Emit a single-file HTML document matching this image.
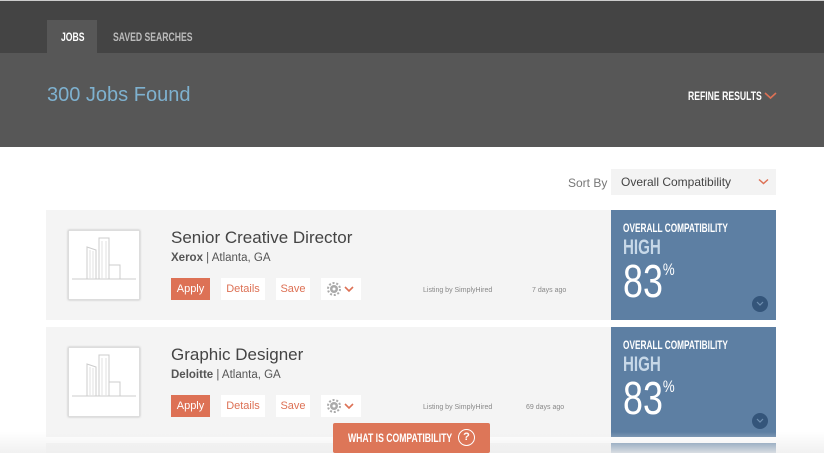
<!DOCTYPE html><html><head><style>
*{margin:0;padding:0;box-sizing:border-box}
html,body{width:824px;height:453px;overflow:hidden}
body{background:#fff;font-family:"Liberation Sans",sans-serif;position:relative}
.a{position:absolute}
.cond{font-weight:bold;transform:scaleX(.72);transform-origin:left center;white-space:nowrap}
.card{position:absolute;left:46px;width:730px;height:110px;background:#f4f4f4}
.blue{position:absolute;left:565px;top:0;width:165px;height:110px;background:#5d7fa3;color:#fff}
.logo{position:absolute;left:22px;top:20px;width:72px;height:70px;background:#fff;border:1px solid #ddd;box-shadow:0 0 2px #bbb}
.btn{position:absolute;top:68px;height:22px;background:#fff;color:#dd7155;font-size:11px;line-height:22px;text-align:center}
</style></head><body>
<div class="a" style="left:0;top:0;width:824px;height:53px;background:#444;border-top:1px solid #ccc"></div>
<div class="a" style="left:47px;top:20px;width:50px;height:33px;background:#575757"></div>
<div class="a cond" style="left:61px;top:30px;font-size:12px;color:#fff">JOBS</div>
<div class="a cond" style="left:113px;top:30px;font-size:12px;color:#bbb">SAVED SEARCHES</div>
<div class="a" style="left:0;top:53px;width:824px;height:94px;background:#575757"></div>
<div class="a" style="left:47px;top:84px;font-size:20px;color:#7eb1cf">300 Jobs Found</div>
<div class="a cond" style="left:688px;top:89px;font-size:12px;color:#fff">REFINE RESULTS</div>
<svg class="a" style="left:764px;top:91px" width="13" height="9"><path d="M1 2l5.5 5L12 2" stroke="#dd7155" stroke-width="1.6" fill="none"/></svg>
<div class="a" style="left:568px;top:176px;font-size:12px;color:#777">Sort By</div>
<div class="a" style="left:611px;top:169px;width:165px;height:26px;background:#f3f3f3;font-size:12px;color:#444;padding:6px 10px">Overall Compatibility</div>
<svg class="a" style="left:758px;top:178px" width="11" height="8"><path d="M1 1.5l4.5 4L10 1.5" stroke="#dd7155" stroke-width="1.5" fill="none"/></svg>

<div class="card" style="top:210px">
<div class="logo"><svg width="70" height="68"><g stroke="#ccc" fill="none"><path d="M3 48h64"/><rect x="30" y="7" width="10" height="41"/><path d="M18 16l9 3v29h-9z"/><rect x="40" y="34" width="11" height="14"/><path d="M21 19v29M24 20v28M33 10v38M37 10v38" stroke="#e2e2e2"/></g></svg></div>
<div class="a" style="left:125px;top:18px;font-size:17px;color:#444">Senior Creative Director</div>
<div class="a" style="left:125px;top:42px;font-size:11.5px;color:#555"><b>Xerox</b> | Atlanta, GA</div>
<div class="btn" style="left:125px;width:39px;background:#dd7155;color:#fff">Apply</div>
<div class="btn" style="left:175px;width:44px">Details</div>
<div class="btn" style="left:230px;width:34px">Save</div>
<div class="btn" style="left:275px;width:40px"><svg width="40" height="22"><circle cx="13" cy="11" r="4" fill="#aaa"/><circle cx="13" cy="11" r="6" fill="none" stroke="#aaa" stroke-width="2" stroke-dasharray="2 1.8"/><circle cx="13" cy="11" r="1.5" fill="#fff"/><path d="M24 9l4 4 4-4" stroke="#dd7155" stroke-width="1.6" fill="none"/></svg></div>
<div class="a" style="left:377px;top:77px;font-size:7px;color:#888">Listing by SimplyHired</div>
<div class="a" style="left:486px;top:77px;font-size:7px;color:#888">7 days ago</div>
<div class="blue"><div class="a cond" style="left:12px;top:13px;font-size:11.5px">OVERALL COMPATIBILITY</div>
<div class="a cond" style="left:12px;top:26px;font-size:21px;color:#c7d8e8">HIGH</div>
<div class="a" style="left:12px;top:44px;font-size:46px;transform:scaleX(.78);transform-origin:left">83<sup style="font-size:17px;vertical-align:22px">%</sup></div>
<div class="a" style="left:141px;top:86px;width:16px;height:16px;border-radius:50%;background:#34557a"></div><svg class="a" style="left:144px;top:90px" width="10" height="8"><path d="M2 2l3 3 3-3" stroke="#6f8fb0" stroke-width="1.2" fill="none"/></svg></div>
</div>

<div class="card" style="top:327px">
<div class="logo"><svg width="70" height="68"><g stroke="#ccc" fill="none"><path d="M3 48h64"/><rect x="30" y="7" width="10" height="41"/><path d="M18 16l9 3v29h-9z"/><rect x="40" y="34" width="11" height="14"/><path d="M21 19v29M24 20v28M33 10v38M37 10v38" stroke="#e2e2e2"/></g></svg></div>
<div class="a" style="left:125px;top:18px;font-size:17px;color:#444">Graphic Designer</div>
<div class="a" style="left:125px;top:42px;font-size:11.5px;color:#555"><b>Deloitte</b> | Atlanta, GA</div>
<div class="btn" style="left:125px;width:39px;background:#dd7155;color:#fff">Apply</div>
<div class="btn" style="left:175px;width:44px">Details</div>
<div class="btn" style="left:230px;width:34px">Save</div>
<div class="btn" style="left:275px;width:40px"><svg width="40" height="22"><circle cx="13" cy="11" r="4" fill="#aaa"/><circle cx="13" cy="11" r="6" fill="none" stroke="#aaa" stroke-width="2" stroke-dasharray="2 1.8"/><circle cx="13" cy="11" r="1.5" fill="#fff"/><path d="M24 9l4 4 4-4" stroke="#dd7155" stroke-width="1.6" fill="none"/></svg></div>
<div class="a" style="left:377px;top:77px;font-size:7px;color:#888">Listing by SimplyHired</div>
<div class="a" style="left:480px;top:77px;font-size:7px;color:#888">69 days ago</div>
<div class="blue"><div class="a cond" style="left:12px;top:13px;font-size:11.5px">OVERALL COMPATIBILITY</div>
<div class="a cond" style="left:12px;top:26px;font-size:21px;color:#c7d8e8">HIGH</div>
<div class="a" style="left:12px;top:44px;font-size:46px;transform:scaleX(.78);transform-origin:left">83<sup style="font-size:17px;vertical-align:22px">%</sup></div>
<div class="a" style="left:141px;top:86px;width:16px;height:16px;border-radius:50%;background:#34557a"></div><svg class="a" style="left:144px;top:90px" width="10" height="8"><path d="M2 2l3 3 3-3" stroke="#6f8fb0" stroke-width="1.2" fill="none"/></svg></div>
</div>
<div class="card" style="top:443px;height:10px"><div class="blue" style="height:10px"></div></div>
<div class="a" style="left:0;top:432px;width:824px;height:21px;background:linear-gradient(rgba(255,255,255,0),rgba(238,238,238,.85))"></div>
<div class="a" style="left:333px;top:423px;width:157px;height:30px;background:#dd7658;border-radius:2px"></div>
<div class="a cond" style="left:348px;top:431px;font-size:12px;color:#fff">WHAT IS COMPATIBILITY</div>
<div class="a" style="left:458px;top:429px;width:17px;height:17px;border:1.5px solid #fff;border-radius:50%;color:#fff;font-size:11px;text-align:center;line-height:14px;font-weight:bold">?</div>
</body></html>
